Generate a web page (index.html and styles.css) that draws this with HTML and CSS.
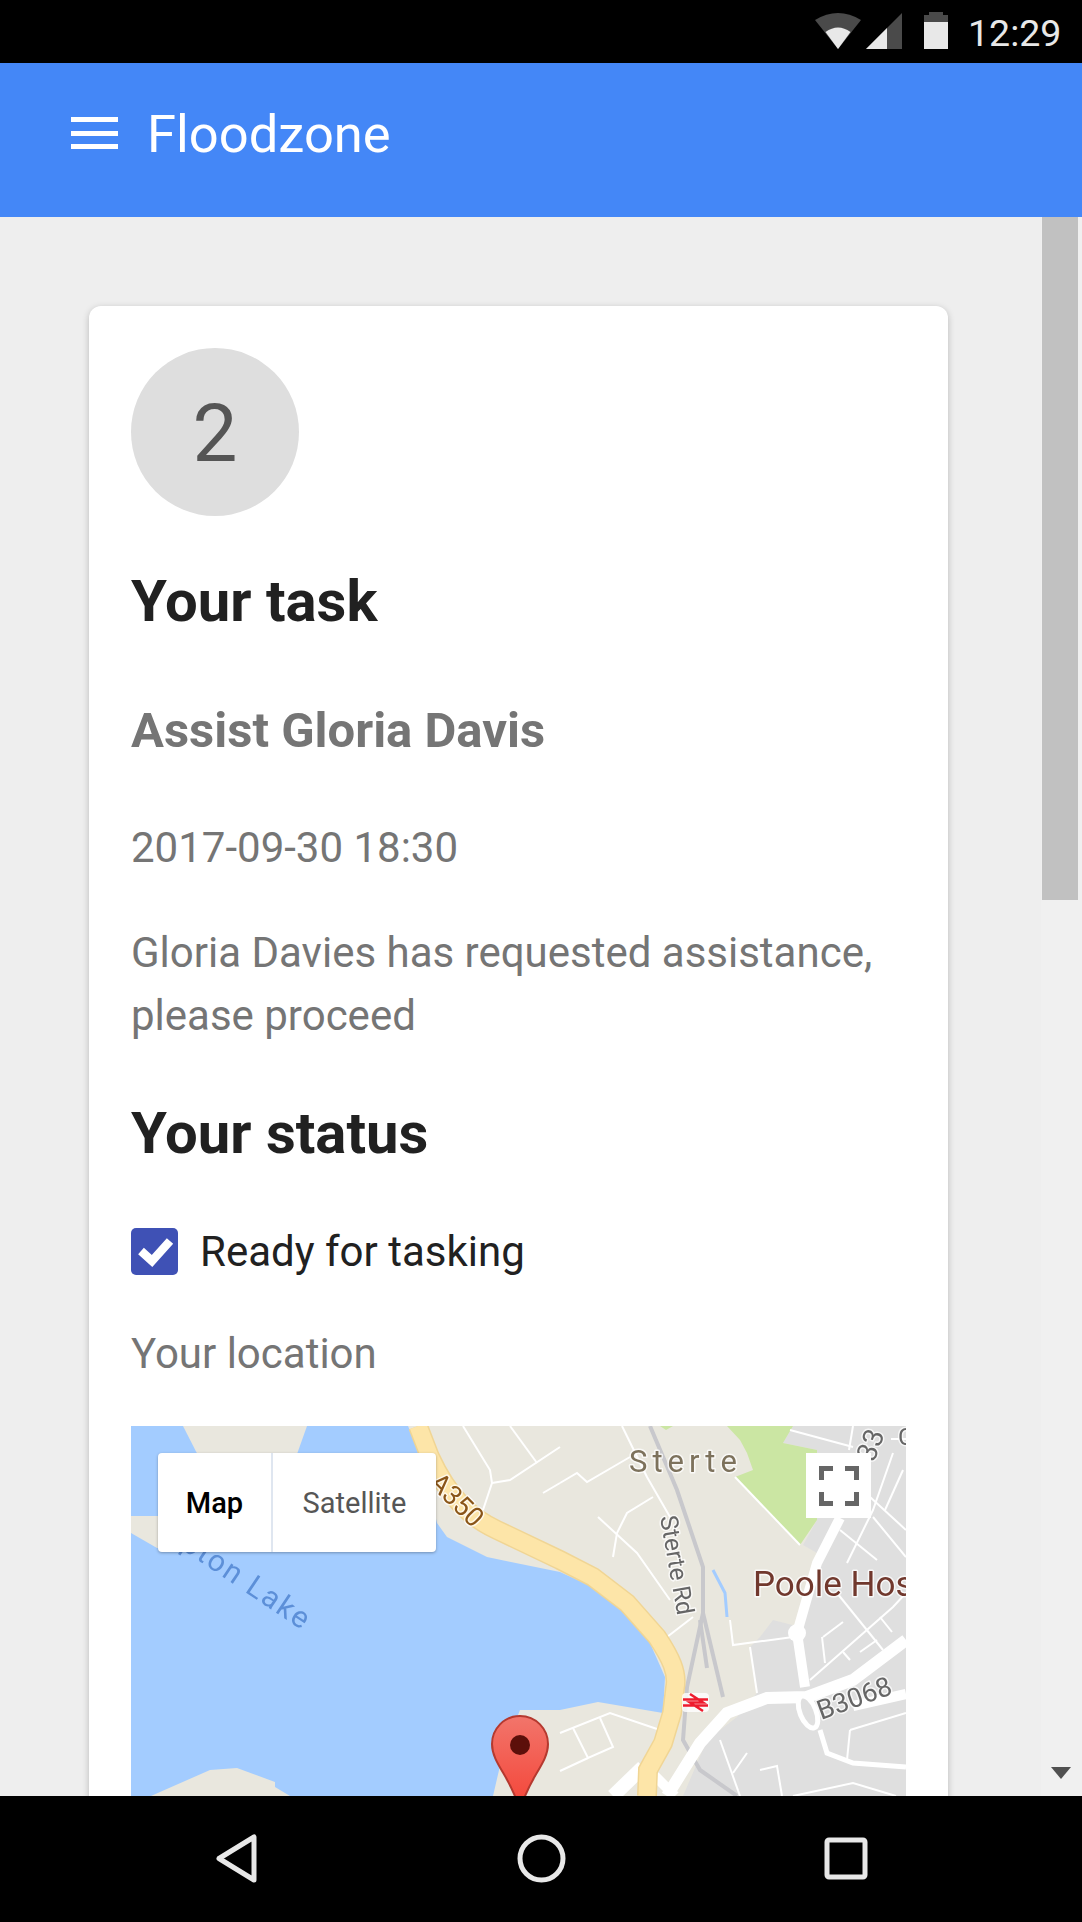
FILE: index.html
```html
<!DOCTYPE html>
<html lang="en">
<head>
<meta charset="utf-8">
<title>Floodzone</title>
<link rel="stylesheet" href="styles.css">
</head>
<body>
<div class="phone">
  <header class="status-bar">
    <svg class="ico-wifi" viewBox="0 0 46 36"><path class="dim" d="M0 7Q23-7 46 7L23 36Z"/><path class="lit" d="M10.500 19Q23 10 35.500 19L23 36Z"/></svg>
    <svg class="ico-signal" viewBox="0 0 37 36"><path class="dim" d="M0 36L36 0V36Z"/><path class="lit" d="M0 36L21 15V36Z"/></svg>
    <svg class="ico-battery" viewBox="0 0 24 37"><path class="dim" d="M0 3H5V0H19V3H24V10H0Z"/><path class="lit" d="M0 10H24V37H0Z"/></svg>
    <span class="clock">12:29</span>
  </header>
  <div class="app-bar">
    <span class="burger"><i></i><i></i><i></i></span>
    <span class="app-title">Floodzone</span>
  </div>
  <div class="viewport">
    <main class="scroll-content">
      <section class="card">
        <div class="step-badge">2</div>
        <h1 class="heading heading-task">Your task</h1>
        <h2 class="task-name">Assist Gloria Davis</h2>
        <p class="meta task-date">2017-09-30 18:30</p>
        <p class="meta task-body">Gloria Davies has requested assistance, please proceed</p>
        <h1 class="heading heading-status">Your status</h1>
        <label class="check-row">
          <span class="checkbox"><svg viewBox="0 0 47 47"><path d="M10 23L21 33L39 13" /></svg></span>
          <span class="check-label">Ready for tasking</span>
        </label>
        <p class="meta location-label">Your location</p>
        <div class="map">
          <svg class="map-canvas" viewBox="0 0 775 370">
            <defs>
              <linearGradient id="pinFill" x1="0" y1="0" x2="0" y2="1">
                <stop offset="0" stop-color="#f2756b"/>
                <stop offset="1" stop-color="#f44336"/>
              </linearGradient>
            </defs>
            <rect class="land" width="775" height="370"/>
            <path class="water" d="M0 0H277L290 30L306 97L316 111L356 131L429 146L462 161L496 187L519 217L534 251L532 287L467 276L429 284L389 284L372 327L362 370H0Z"/>
            <path class="land" d="M52 0H176L160 45H75Z"/>
            <path class="land" d="M0 107L26 122L60 122L50 90L0 90Z"/>
            <path class="land" d="M29 366L79 344L106 342L144 356L144 361L159 370H20Z"/>
            <path class="grey" d="M662 0L652 17L686 24L686 94L672 119L686 127L669 201L642 194L629 211L619 221L626 267L606 291L576 314L552 370H775V0Z"/>
            <path class="green" d="M596 0L609 14L616 27L622 44L604 51L669 119L686 94L686 24L652 17L662 0Z"/>
            <path class="green" d="M529 0L535 4L542 0Z"/>

            <g class="thin">
              <path d="M332 0L359 44L361 57L352 84"/>
              <path d="M379 0L406 37"/>
              <path d="M429 21L379 54L361 57"/>
              <path d="M429 57L412 67"/>
              <path d="M491 0L516 51L539 91"/>
              <path d="M429 57L446 47L456 56L499 31"/>
              <path d="M522 71L496 87L486 107L482 131"/>
              <path d="M467 91L506 127L539 174"/>
              <path d="M536 211L562 191"/>
              <path d="M599 194L602 219L662 211"/>
              <path d="M619 221L626 267"/>
              <path d="M429 307L479 287L529 304"/>
              <path d="M442 302L457 332L482 321L469 292"/>
              <path d="M429 345L457 332"/>
              <path d="M604 51L669 119"/>
              <path d="M659 4L722 21"/>
              <path d="M722 0L718 24"/>
              <path d="M762 27L742 84L716 137"/>
              <path d="M772 44L754 84"/>
              <path d="M739 71L775 104"/>
              <path d="M742 91L775 131"/>
              <path d="M709 104L746 134"/>
              <path d="M706 167L752 224"/>
              <path d="M679 254L762 181L775 167"/>
              <path d="M692 211L712 196"/>
              <path d="M691 211L694 237"/>
              <path d="M729 226L746 214"/>
              <path d="M749 191L761 206"/>
              <path d="M712 226L719 234"/>
              <path d="M719 304L775 287"/>
              <path d="M719 304L716 334"/>
              <path d="M589 314L609 370"/>
              <path d="M629 344L646 340L651 370"/>
              <path d="M602 347L616 327"/>
              <path d="M662 370L722 357L765 370"/>
              <path d="M760 13H775"/>
            </g>
            <g class="rail">
              <path d="M519 0L546 64L572 141L572 187L556 261L552 314L569 344L606 370"/>
              <path d="M572 187L592 271"/>
              <path d="M569 194L576 242"/>
            </g>
            <path class="river" d="M582 144L594 167L596 191"/>
            <g class="white-road">
              <path class="w10" d="M709 92L686 137L666 207L674 261"/>
              <path class="w12" d="M775 214L722 254L676 271L636 272L596 287L569 317L536 370"/>
              <path class="w10" d="M775 268L722 280"/>
              <path class="w5" d="M689 304L696 327L722 337L775 341"/>
              <path class="w14" d="M482 370L512 341"/>
              <path class="w10" d="M524 350L544 370"/>
            </g>
            <circle class="blob" cx="666" cy="207" r="9"/>
            <ellipse class="ring" cx="677" cy="286" rx="8" ry="17" transform="rotate(-22 677 286)"/>
            <path class="road-edge" d="M287 0L299 31C318 72 340 92 366 104L429 134L462 151L496 177L526 211C540 232 547 247 544 262L541 287L532 317L517 344L516 370"/>
            <path class="road" d="M287 0L299 31C318 72 340 92 366 104L429 134L462 151L496 177L526 211C540 232 547 247 544 262L541 287L532 317L517 344L516 370"/>
            <rect class="rail-halo" x="551" y="267" width="27" height="19" rx="4"/>
            <path class="rail-sign" d="M552 273.500H577M552 279.500H577M559 268L572 276.500H559L572 285"/>
            <text class="lbl lbl-area" x="498" y="46">Sterte</text>
            <text class="lbl lbl-road" transform="translate(529 91) rotate(80)">Sterte Rd</text>
            <text class="lbl lbl-poi" x="622" y="170">Poole Hospital</text>
            <text class="lbl lbl-b3068" transform="translate(690 294) rotate(-20)">B3068</text>
            <text class="lbl lbl-a" transform="translate(297 58) rotate(45)">A350</text>
            <text class="lbl lbl-water" text-anchor="end" transform="translate(172 205) rotate(34)">Upton Lake</text>
            <text class="lbl lbl-num" transform="translate(743 37) rotate(-70)">33</text>
            <text class="lbl lbl-road" x="767" y="19">C</text>
            <path class="pin-body" d="M389 290C373 290 361 303 361 318C361 338 381 352 389 385C397 352 417 338 417 318C417 303 405 290 389 290Z"/>
            <circle class="pin-dot" cx="389" cy="319" r="10"/>
          </svg>
          <div class="map-type">
            <span class="map-type-btn is-active">Map</span>
            <span class="map-type-btn">Satellite</span>
          </div>
          <div class="fullscreen">
            <svg viewBox="0 0 40 40"><path d="M2.500 14V2.500H14M26 2.500H37.500V14M37.500 26V37.500H26M14 37.500H2.500V26"/></svg>
          </div>
        </div>
      </section>
    </main>
    <aside class="scrollbar">
      <div class="scroll-thumb"></div>
      <div class="scroll-down"></div>
    </aside>
  </div>
  <nav class="nav-bar">
    <svg class="nav-ico nav-back" viewBox="0 0 41 49"><path d="M38 3V46L3 24.500Z"/></svg>
    <svg class="nav-ico nav-home" viewBox="0 0 49 49"><circle cx="24.500" cy="24.500" r="21.500"/></svg>
    <svg class="nav-ico nav-recent" viewBox="0 0 44 43"><rect x="3" y="3" width="38" height="37" rx="2"/></svg>
  </nav>
</div>
</body>
</html>
```

FILE: styles.css
```css
* { box-sizing: border-box; }
html, body { margin: 0; padding: 0; }
body { background: #000; font-family: Roboto, "Liberation Sans", sans-serif; }

.phone { width: 1082px; height: 1922px; display: flex; flex-direction: column; overflow: hidden; }

/* status bar */
.status-bar { height: 63px; flex: none; background: #000; display: flex; align-items: flex-start; padding: 12px 0 0 815px; }
.status-bar svg { display: block; flex: none; }
.dim { fill: #4a4a4a; }
.lit { fill: #e8e8e8; }
.ico-wifi { width: 46px; height: 36px; margin-top: 1px; }
.ico-signal { width: 37px; height: 36px; margin: 1px 0 0 5px; }
.ico-battery { width: 24px; height: 37px; margin-left: 21px; }
.clock { margin: -1px 0 0 20px; font-size: 37.500px; line-height: 44px; color: #e8e8e8; }

/* app bar */
.app-bar { height: 154px; flex: none; background: #4487f7; display: flex; align-items: flex-start; padding: 54px 0 0 71px; }
.burger { width: 47px; height: 32px; display: flex; flex-direction: column; justify-content: space-between; flex: none; }
.burger i { display: block; height: 5px; background: #fff; }
.app-title { margin: -17px 0 0 29px; font-size: 52.500px; line-height: 68px; color: #fff; }

/* scroll area */
.viewport { flex: 1; min-height: 0; display: flex; background: #eeeeee; overflow: hidden; }
.scroll-content { flex: 1; padding: 89px 0 0 89px; min-width: 0; }
.scrollbar { width: 41px; flex: none; display: flex; flex-direction: column; justify-content: space-between; background: #f0f0f0; padding-left: 1px; }
.scroll-thumb { width: 36px; height: 683px; background: #c1c1c1; }
.scroll-down { width: 0; height: 0; margin: 0 0 17px 9px; border-style: solid; border-width: 12px 10px 0; border-color: #505050 transparent transparent; }

/* card */
.card { width: 859px; padding: 42px; background: #fff; border-radius: 12px; box-shadow: 0 2px 7px rgba(0, 0, 0, .22); }
.step-badge { width: 168px; height: 168px; border-radius: 50%; background: #dedede; color: #555; font-size: 80px; line-height: 173px; text-align: center; }
.heading { margin: 0; font-size: 58px; line-height: 68px; font-weight: 700; color: #212121; }
.heading-task { margin-top: 51px; }
.heading-status { margin-top: 52px; }
.task-name { margin: 65px 0 0; font-size: 49px; line-height: 62px; font-weight: 700; color: #757575; }
.meta { margin: 0; font-size: 42px; line-height: 62px; color: #757575; }
.task-date { margin-top: 55px; }
.task-body { margin-top: 42px; line-height: 63px; }

.check-row { display: flex; align-items: center; margin-top: 61px; }
.checkbox { width: 47px; height: 47px; border-radius: 5px; background: #3f51b5; flex: none; }
.checkbox svg { display: block; width: 47px; height: 47px; fill: none; stroke: #fff; stroke-width: 8.500; }
.check-label { margin-left: 22px; font-size: 42px; line-height: 47px; color: #212121; }
.location-label { margin-top: 48px; }

/* map */
.map { position: relative; width: 775px; height: 370px; margin-top: 41px; overflow: hidden; }
.map-canvas { display: block; width: 775px; height: 370px; filter: blur(.6px); }
.land { fill: #e9e7de; }
.water { fill: #a3ccff; }
.grey { fill: #dfdfdf; }
.green { fill: #cbe6a3; }
.thin path { fill: none; stroke: #fff; stroke-width: 2; }
.rail path { fill: none; stroke: #c8c8cc; stroke-width: 4; }
.river { fill: none; stroke: #a3ccff; stroke-width: 3; }
.white-road path { fill: none; stroke: #fff; }
.w5 { stroke-width: 5; }
.w10 { stroke-width: 10; }
.w12 { stroke-width: 12; }
.w14 { stroke-width: 14; }
.blob { fill: #fff; }
.ring { fill: #dfdfdf; stroke: #fff; stroke-width: 5; }
.road-edge { fill: none; stroke: #f0d594; stroke-width: 20; }
.road { fill: none; stroke: #fde5a8; stroke-width: 17; }
.rail-halo { fill: rgba(255, 255, 255, .8); }
.rail-sign { fill: none; stroke: #ee1c2e; stroke-width: 2.500; }

.lbl { font-family: Roboto, "Liberation Sans", sans-serif; paint-order: stroke; stroke: rgba(255, 255, 255, .75); stroke-width: 3px; stroke-linejoin: round; }
.lbl-area { font-size: 31px; letter-spacing: 5px; fill: #7d725c; }
.lbl-road { font-size: 24.500px; fill: #666; }
.lbl-b3068 { font-size: 27px; fill: #666; }
.lbl-num { font-size: 28px; fill: #666; }
.lbl-poi { font-size: 35px; fill: #71382d; }
.lbl-a { font-size: 27px; fill: #8a5518; }
.lbl-water { font-size: 30px; fill: #5c8fd8; stroke: none; letter-spacing: 2px; }

.pin-body { fill: url(#pinFill); stroke: #b5392f; stroke-width: 2; }
.pin-dot { fill: #5c0f0a; }

.map-type { position: absolute; left: 27px; top: 27px; display: flex; height: 99px; background: #fff; border-radius: 4px; box-shadow: 0 1px 3px rgba(0, 0, 0, .3); }
.map-type-btn { display: flex; align-items: center; justify-content: center; width: 163px; font-size: 29px; color: #565656; }
.map-type-btn.is-active { width: 115px; color: #000; font-weight: 500; border-right: 2px solid #dfe6f0; }
.fullscreen { position: absolute; left: 675px; top: 27px; width: 65px; height: 65px; background: #fff; display: flex; align-items: center; justify-content: center; }
.fullscreen svg { display: block; width: 40px; height: 40px; fill: none; stroke: #666; stroke-width: 5; }

/* nav bar */
.nav-bar { height: 126px; flex: none; background: #000; display: flex; align-items: flex-start; padding: 38px 0 0 216px; }
.nav-ico { display: block; flex: none; fill: none; stroke: #e8e8e8; stroke-width: 5; stroke-linejoin: round; }
.nav-back { width: 41px; height: 49px; }
.nav-home { width: 49px; height: 49px; margin-left: 260px; }
.nav-recent { width: 44px; height: 43px; margin: 3px 0 0 258px; }
```
